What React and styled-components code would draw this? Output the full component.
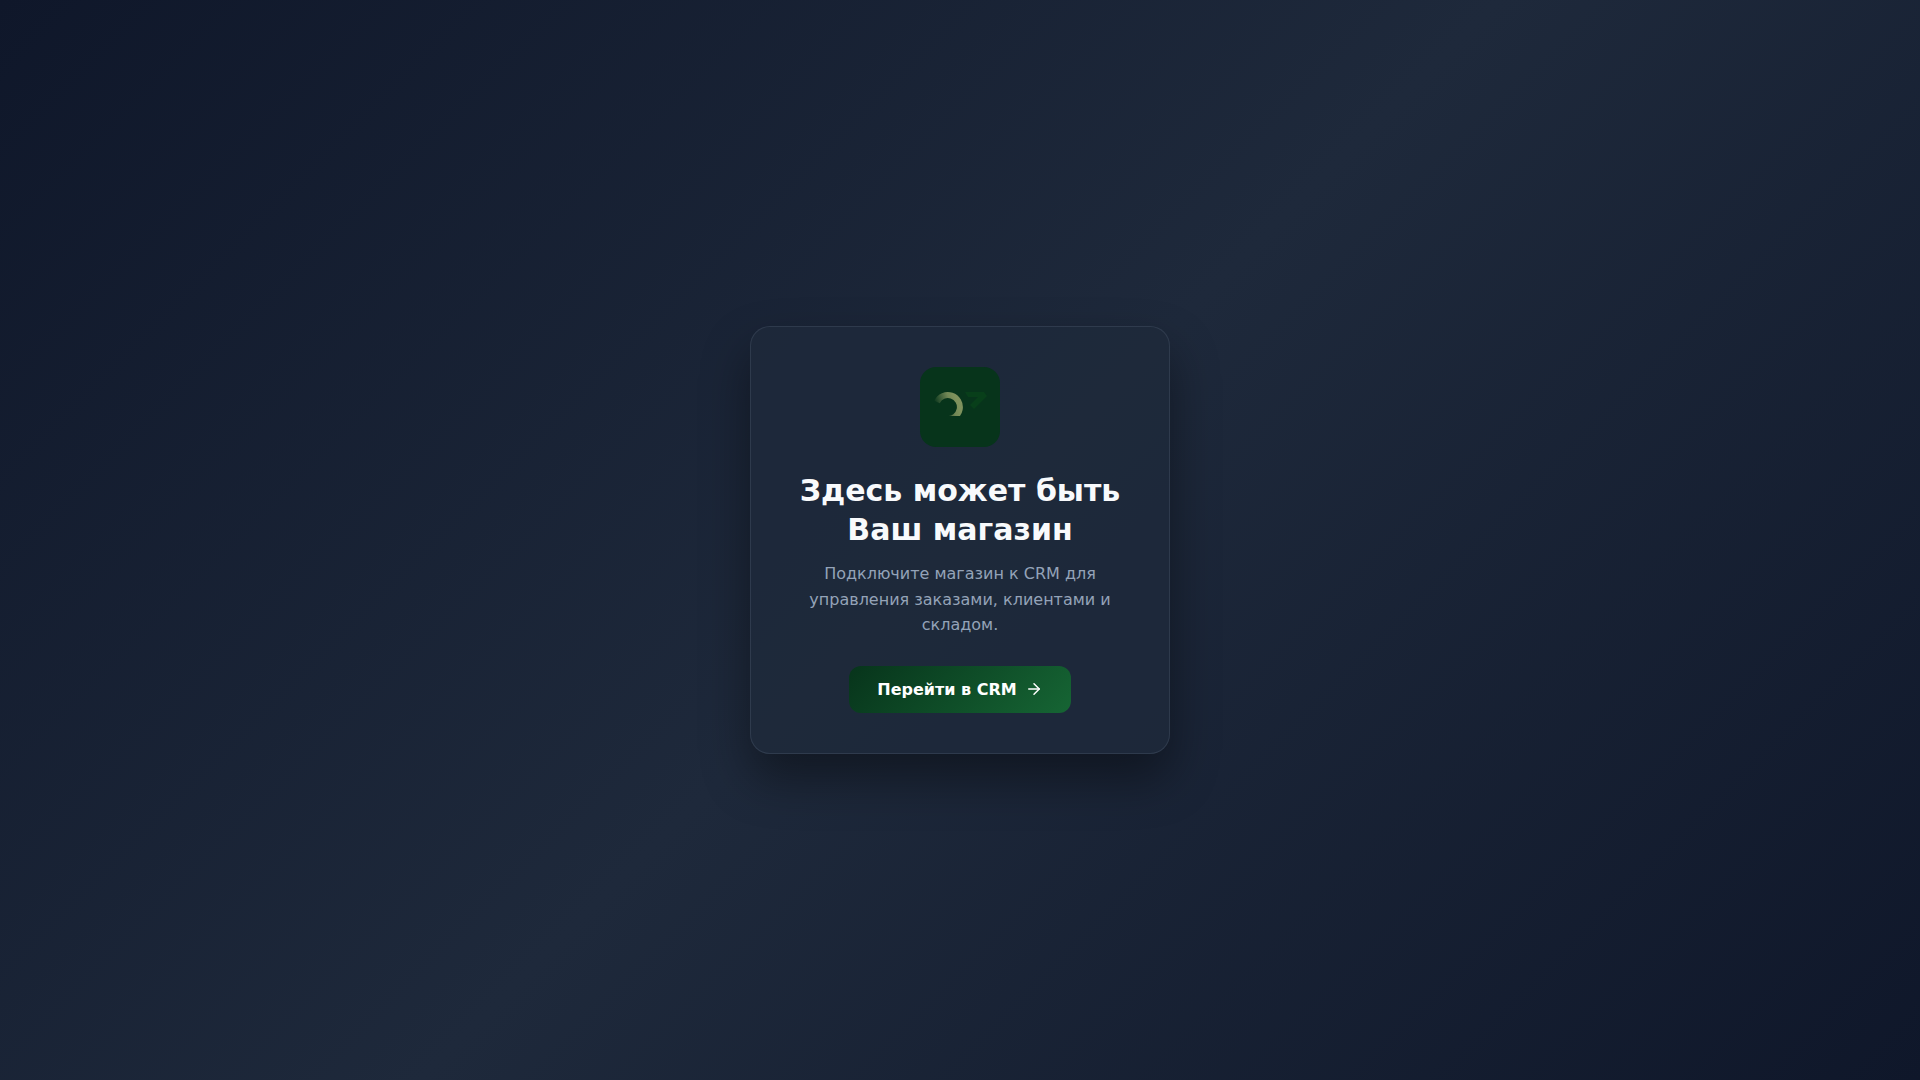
import React from "react";
import styled, { createGlobalStyle } from "styled-components";

const GlobalStyle = createGlobalStyle`
  *, *::before, *::after { box-sizing: border-box; }
  body {
    margin: 0;
    font-family: "DejaVu Sans", sans-serif;
    font-size: 16px;
  }
`;

const Page = styled.main`
  min-height: 100vh;
  display: flex;
  align-items: center;
  justify-content: center;
  padding: 24px;
  background: linear-gradient(135deg, #0f172a 0%, #1e293b 50%, #0f172a 100%);
`;

const Card = styled.section`
  width: 100%;
  max-width: 420px;
  padding: 40px;
  display: flex;
  flex-direction: column;
  align-items: center;
  text-align: center;
  background: rgba(30, 41, 59, 0.8);
  border: 1px solid rgba(148, 163, 184, 0.15);
  border-radius: 20px;
  box-shadow: 0 24px 48px rgba(0, 0, 0, 0.4);
`;

const Logo = styled.svg`
  width: 80px;
  height: 80px;
  margin-bottom: 24px;
  border-radius: 16px;
  background: #07341b;
`;

const Title = styled.h1`
  margin: 0 0 12px;
  font-size: 30px;
  font-weight: 700;
  line-height: 39px;
  color: #f8fafc;
`;

const Description = styled.p`
  margin: 0 0 28px;
  line-height: 1.6;
  color: #94a3b8;
`;

const CrmLink = styled.a`
  display: inline-flex;
  align-items: center;
  gap: 8px;
  padding: 14px 28px;
  border-radius: 12px;
  background: linear-gradient(135deg, #07341b, #166534);
  color: #ffffff;
  font-weight: 600;
  text-decoration: none;
`;

const ArrowIcon = styled.svg`
  width: 18px;
  height: 18px;
  fill: none;
  stroke: currentColor;
  stroke-width: 2;
  stroke-linecap: round;
  stroke-linejoin: round;
`;

export default function App() {
  return (
    <>
      <GlobalStyle />
      <Page>
        <Card>
          <Logo viewBox="0 0 80 80" aria-hidden="true">
            <defs>
              <linearGradient id="ring" gradientUnits="userSpaceOnUse" x1="15" y1="37" x2="35" y2="29">
                <stop offset="0" stopColor="#8c9c64" stopOpacity="0" />
                <stop offset="0.7" stopColor="#8c9c64" stopOpacity="0.8" />
                <stop offset="1" stopColor="#8c9c64" stopOpacity="0.9" />
              </linearGradient>
              <clipPath id="upper">
                <rect x="12" y="25" width="56" height="24" />
              </clipPath>
            </defs>
            <g clipPath="url(#upper)">
              <path d="M17 35A12 12 0 1 1 27 52" fill="none" stroke="url(#ring)" strokeWidth="6" />
              <path d="M45 25H64L67 29L54 42L50 38L58 30H48Z" fill="#083f1a" />
            </g>
          </Logo>
          <Title>Здесь может быть Ваш магазин</Title>
          <Description>
            Подключите магазин к CRM для управления заказами, клиентами и складом.
          </Description>
          <CrmLink href="#crm">
            Перейти в CRM
            <ArrowIcon viewBox="0 0 24 24" aria-hidden="true">
              <path d="M5 12h14" />
              <path d="m12 5 7 7-7 7" />
            </ArrowIcon>
          </CrmLink>
        </Card>
      </Page>
    </>
  );
}
